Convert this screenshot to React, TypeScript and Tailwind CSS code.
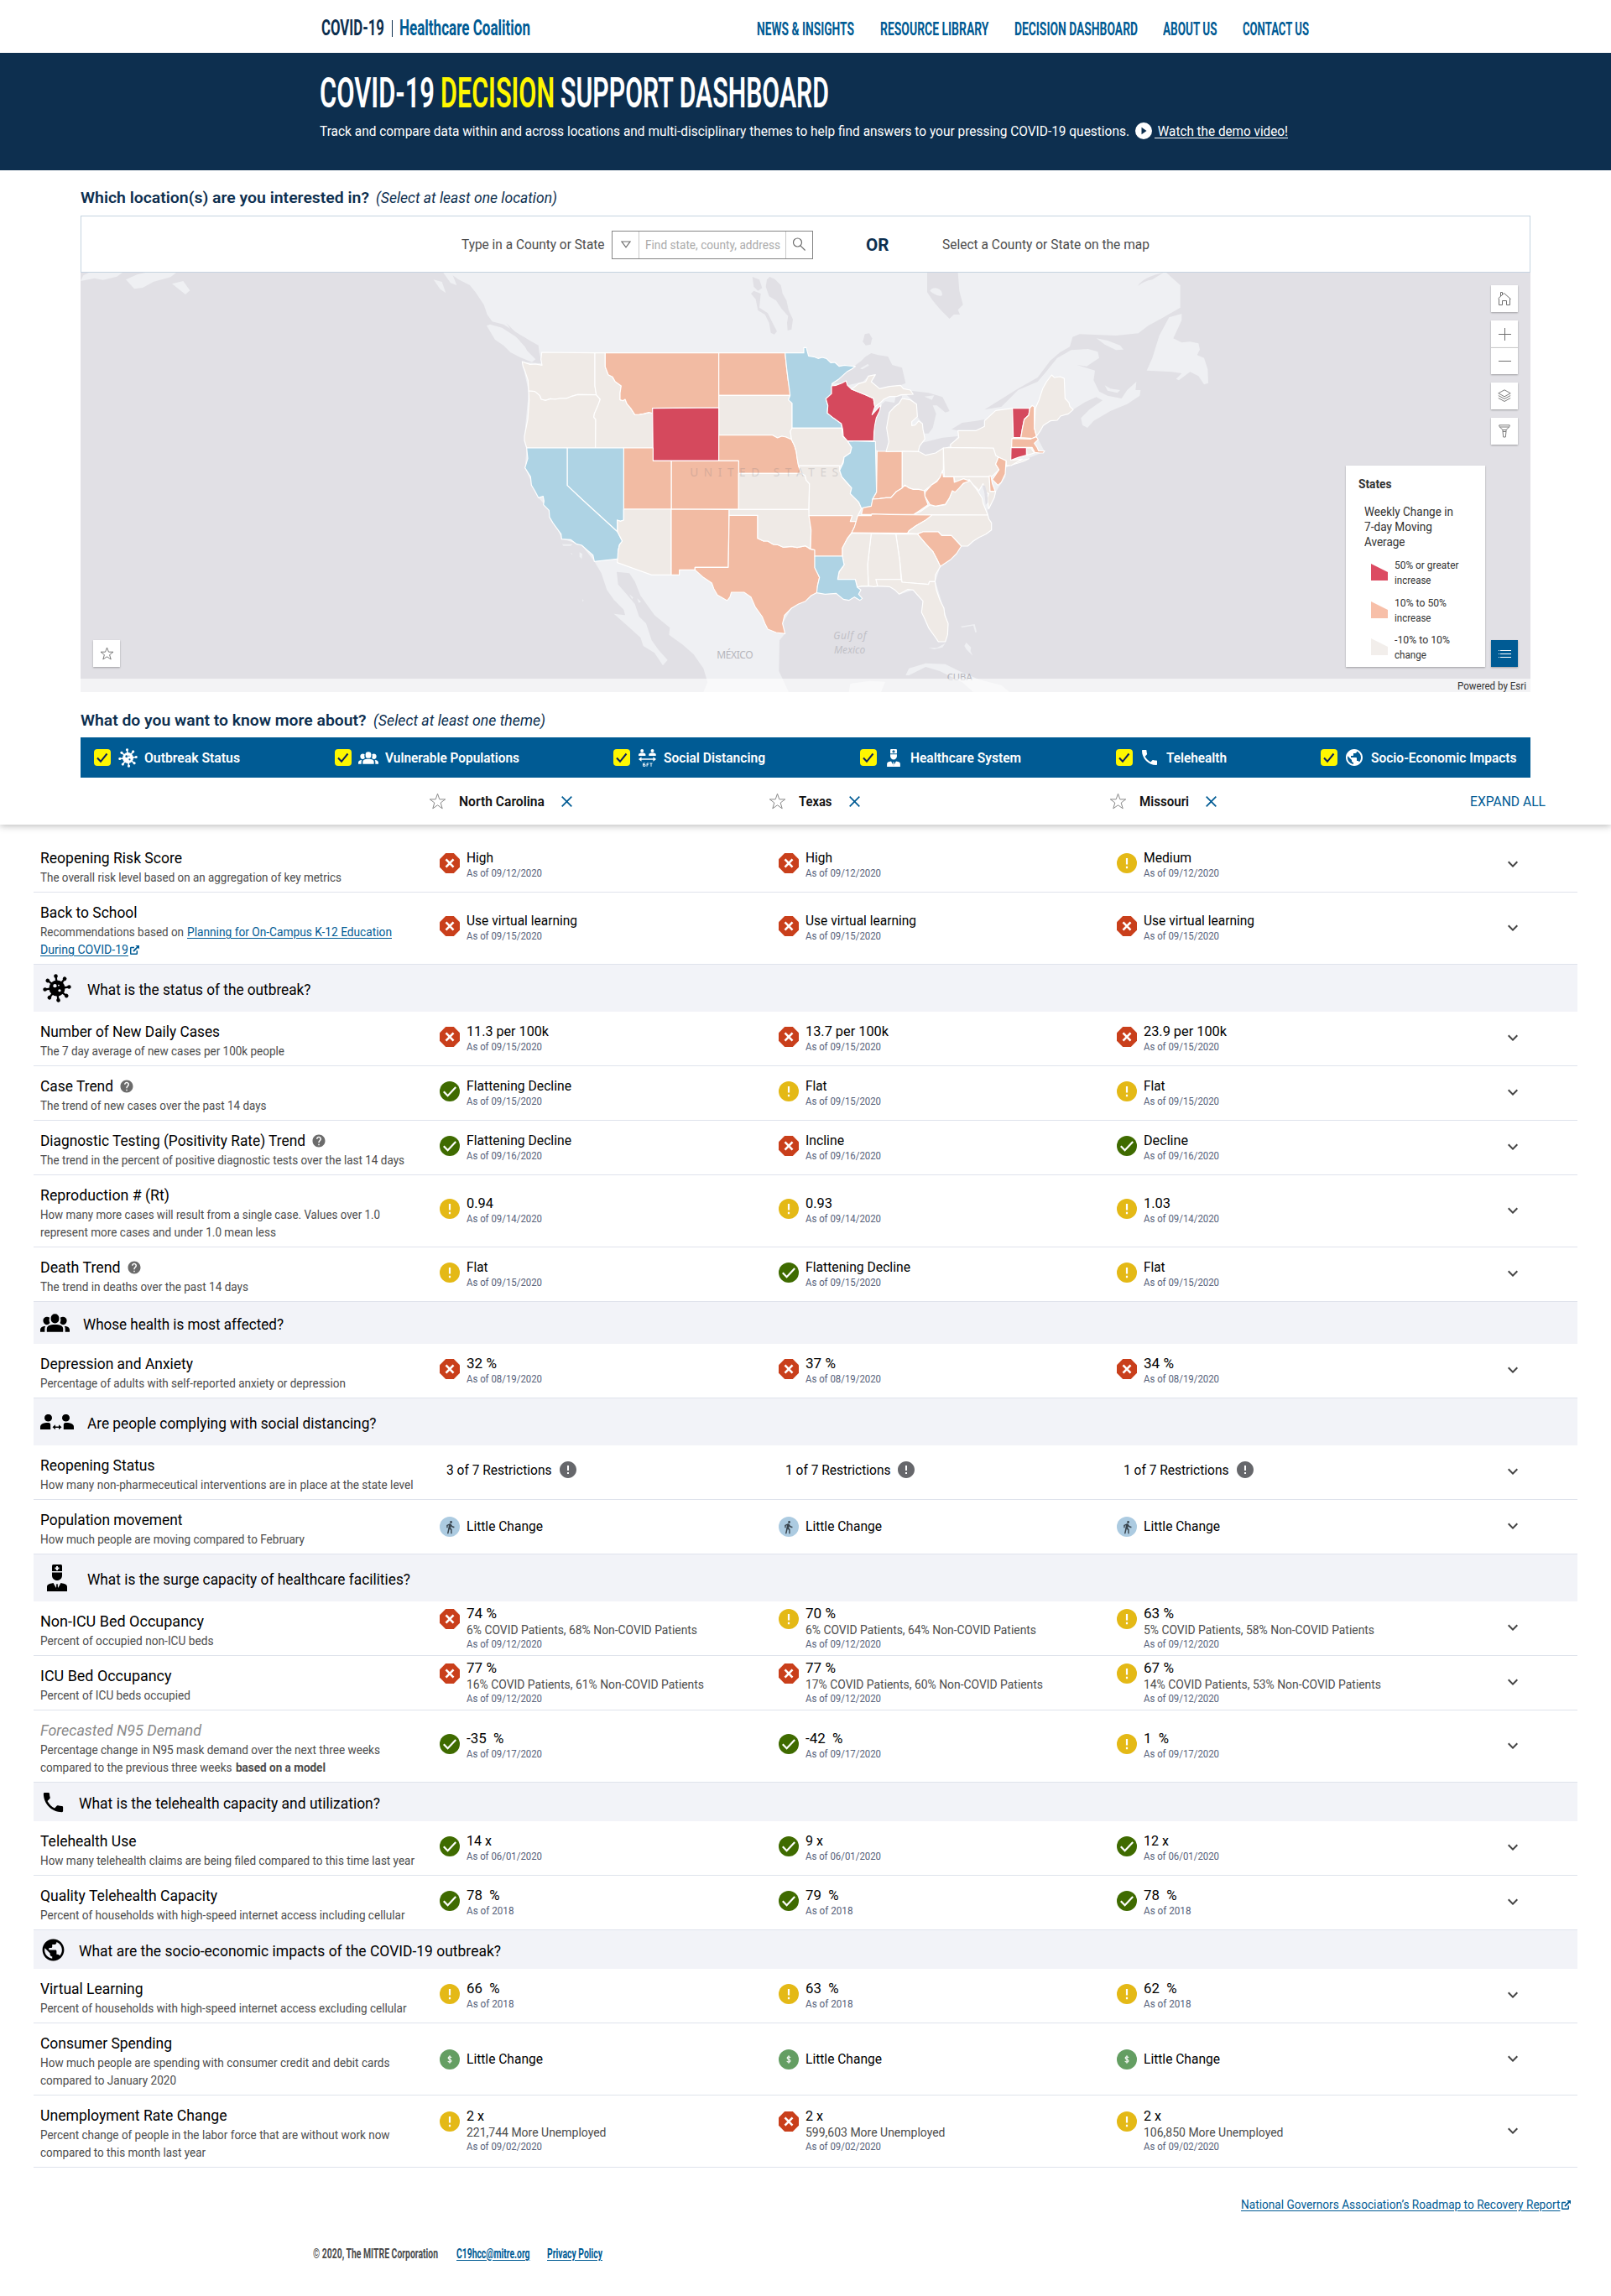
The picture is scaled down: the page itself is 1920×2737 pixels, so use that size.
import { useLayoutEffect, useRef, useState, type ReactNode } from 'react';
import { MdExpandMore, MdHelp, MdError, MdPhone, MdPublic, MdDirectionsWalk } from 'react-icons/md';

/* Narrow text set to a fixed measure: the glyphs are condensed to fill `w` pixels. */
function Fit({ w, children, className = '' }: { w: number; children: ReactNode; className?: string }) {
  const ref = useRef<HTMLSpanElement>(null);
  const [scale, setScale] = useState(1);
  useLayoutEffect(() => {
    const el = ref.current;
    if (el && el.offsetWidth > 0) {
      const natural = el.getBoundingClientRect().width / scale;
      setScale(w / natural);
    }
  }, [w]);
  return (
    <span className="inline-block whitespace-pre" style={{ width: w }}>
      <span ref={ref} className={`inline-block origin-left ${className}`} style={{ transform: `scaleX(${scale})` }}>
        {children}
      </span>
    </span>
  );
}

/* ---------- icons ---------- */

function Virus({ size, spot }: { size: number; spot: string }) {
  const arms = [0, 45, 90, 135, 180, 225, 270, 315];
  return (
    <svg width={size} height={size} viewBox="0 0 32 32" fill="currentColor">
      <g transform="rotate(-6 16 16)">
        {arms.map((a) => (
          <g key={a} transform={`rotate(${a} 16 16)`}>
            <rect x="15" y="2.4" width="2.2" height="8" />
            <circle cx="16" cy="2.4" r="2.2" />
          </g>
        ))}
      </g>
      <circle cx="16" cy="16" r="9" />
      <circle cx="13.6" cy="13.4" r="2" className={spot} />
      <circle cx="18.8" cy="18.6" r="1.5" className={spot} />
      <circle cx="17.8" cy="12.8" r="0.9" className={spot} />
    </svg>
  );
}

function People({ w, h }: { w: number; h: number }) {
  return (
    <svg width={w} height={h} viewBox="0 0 36 22" fill="currentColor">
      <rect x="13" y="0" width="10" height="11.5" rx="4.8" />
      <path d="M8 22v-3.5c0-3.6 3-5.5 10-5.5s10 1.900 10 5.500V22z" />
      <path d="M11.500 4.500C8 2.200 3.500 4 3.500 8c0 3 1.800 5.200 4.300 5.200 2 0 3.200-1 4-2.200-1-2-1.200-4.500-.3-6.500z" />
      <path d="M24.500 4.500C28 2.200 32.500 4 32.500 8c0 3-1.800 5.200-4.300 5.200-2 0-3.200-1-4-2.200 1-2 1.200-4.500.3-6.500z" />
      <path d="M0 22v-2.500c0-2.500 1.800-4.300 6.500-4.700C5.800 16 5.500 17 5.500 18.500V22z" />
      <path d="M36 22v-2.500c0-2.500-1.800-4.300-6.500-4.700.7 1.200 1 2.200 1 3.700V22z" />
    </svg>
  );
}

function DistancingWide() {
  return (
    <svg width="40" height="18" viewBox="0 0 40 18" fill="currentColor">
      <ellipse cx="9.500" cy="4.200" rx="4.500" ry="4.400" />
      <path d="M0 18v-2.800C0 12 3 10.200 7 10l3 .1c1.300.3 2.200 1 2.200 2.300V18z" />
      <ellipse cx="30.500" cy="4.200" rx="4.500" ry="4.400" />
      <path d="M40 18v-2.800c0-3.200-3-5-7-5.200l-3 .1c-1.300.3-2.200 1-2.200 2.300V18z" />
      <path d="M14.500 15.200l3.500-3v2.200h4v-2.200l3.500 3-3.500 3V16h-4v2.200z" />
    </svg>
  );
}

function DistancingSmall() {
  return (
    <svg width="21" height="21" viewBox="0 0 21 21" fill="currentColor">
      <circle cx="4.200" cy="2" r="2" />
      <path d="M0 8V6.500C0 5.200 1.500 4.600 4.200 4.600s4.200.6 4.200 1.900V8z" />
      <circle cx="16.500" cy="2" r="2" />
      <path d="M12.300 8V6.500c0-1.300 1.500-1.900 4.200-1.900s4.200.6 4.200 1.900V8z" />
      <path d="M0 12l3.500-2.800v2h14v-2L21 12l-3.500 2.800v-2h-14v2z" />
      <path d="M5.500 17h2.500M5.500 17v3.300H8v-1.700H5.500M10 20.800V17h2.200M10 18.700h1.800M13.500 17h3M15 17v3.800" fill="none" stroke="currentColor" strokeWidth="0.9" />
    </svg>
  );
}

function Doctor({ w, h, cross }: { w: number; h: number; cross: string }) {
  return (
    <svg width={w} height={h} viewBox="0 0 24 32" fill="currentColor">
      <path d="M6 1.500Q6 0 7.500 0h9Q18 0 18 1.500V8H6z" />
      <path d="M11 2h2v1.500h1.500v2H13V7h-2V5.500H9.500v-2H11z" className={cross} />
      <path d="M6 9.500h12V13c0 3.500-2.700 6-6 6s-6-2.500-6-6z" />
      <path d="M0 32v-5.500C0 24 2 23 7.500 22L12 30l4.500-8c5.500 1 7.500 2 7.500 4.500V32z" />
      <path d="M10.700 23.500h2.600l-.6 2 .8 3L12 30.500 10.500 28.500l.8-3z" />
    </svg>
  );
}

type Status = 'bad' | 'warn' | 'good' | 'walk' | 'money';

function StatusIcon({ kind }: { kind: Status }) {
  if (kind === 'bad')
    return (
      <svg width="24" height="24" viewBox="0 0 24 24" className="shrink-0">
        <path d="M7.200 0h9.600L24 7.200v9.600L16.800 24H7.200L0 16.800V7.200z" className="fill-[#c93f1b]" />
        <path d="M7.500 7.300l9 9.400M16.500 7.300l-9 9.400" className="stroke-white" strokeWidth="2.600" />
      </svg>
    );
  if (kind === 'warn')
    return (
      <svg width="24" height="24" viewBox="0 0 24 24" className="shrink-0">
        <circle cx="12" cy="12" r="12" className="fill-[#e4b916]" />
        <path d="M12 6v7.600M12 15.800v2.400" className="stroke-white" strokeWidth="2.200" />
      </svg>
    );
  if (kind === 'good')
    return (
      <svg width="24" height="24" viewBox="0 0 24 24" className="shrink-0">
        <circle cx="12" cy="12" r="12" className="fill-[#3f6b00]" />
        <path d="M4.800 12.200l4.800 5L19.200 7" fill="none" className="stroke-white" strokeWidth="2.200" />
      </svg>
    );
  if (kind === 'walk')
    return (
      <span className="flex h-6 w-6 shrink-0 items-center justify-center rounded-full bg-[#accbe1] text-[#38444d]">
        <MdDirectionsWalk size={17} />
      </span>
    );
  return (
    <svg width="24" height="24" viewBox="0 0 24 24" className="shrink-0">
      <circle cx="12" cy="12" r="12" className="fill-[#649e62]" />
      <path d="M14 10c-.3-.9-1-1.200-2-1.200-1.200 0-1.900.6-1.900 1.500 0 2.200 3.900 1.100 3.900 3.400 0 1-.8 1.500-2 1.500s-1.900-.4-2.200-1.300M12 7.300v9.400" fill="none" className="stroke-white" strokeWidth="1.100" />
    </svg>
  );
}

function ExternalLink() {
  return (
    <svg width="11" height="11" viewBox="0 0 11 11" className="inline-block" fill="none" stroke="currentColor" strokeWidth="1.500">
      <path d="M8.300 6.200v3.300a.8.800 0 0 1-.8.800H1.500a.8.800 0 0 1-.8-.8V3.300c0-.4.300-.8.800-.8H5" />
      <path d="M4 7L9.600 1.400" strokeWidth="1.800" />
      <path d="M6.400 0H11v4.600z" fill="currentColor" stroke="none" />
    </svg>
  );
}

/* ---------- top of the page ---------- */

function NavBar() {
  const links: [string, number][] = [
    ['NEWS & INSIGHTS', 116],
    ['RESOURCE LIBRARY', 129.5],
    ['DECISION DASHBOARD', 147],
    ['ABOUT US', 64.5],
    ['CONTACT US', 79],
  ];
  return (
    <header className="flex h-[63px] items-center bg-white pt-[5px] pl-[382.500px] font-bold text-[#005b94]">
      <div className="flex h-8 w-[519.500px] items-center text-[25px] leading-8">
        <Fit w={75} className="text-[#0d2f4f]">COVID-19</Fit>
        <span className="mr-[8px] ml-[9px] h-5 w-px bg-[#0d2f4f]" />
        <Fit w={156}>Healthcare Coalition</Fit>
      </div>
      <nav className="flex gap-[30.500px] pt-px text-[22px] leading-8">
        {links.map(([t, w]) => (
          <a key={t}><Fit w={w}>{t}</Fit></a>
        ))}
      </nav>
    </header>
  );
}

function Hero() {
  return (
    <section className="h-[140px] bg-[#0d2f4f] pt-[19px] pl-[381px] text-white">
      <h1 className="flex h-[58px] items-center gap-[7px] text-[49.500px] leading-[58px] font-semibold">
        <Fit w={137}>COVID-19</Fit>
        <Fit w={136} className="text-[#fff700]">DECISION</Fit>
        <Fit w={320}>SUPPORT DASHBOARD</Fit>
      </h1>
      <p className="mt-[5px] flex h-[22px] items-center text-[17px] leading-[22px]">
        <Fit w={965}>
          Track and compare data within and across locations and multi-disciplinary themes to help find answers to your pressing COVID-19 questions.
        </Fit>
        <svg width="20" height="20" viewBox="0 0 20 20" className="ml-[7px]">
          <circle cx="10" cy="10" r="10" fill="white" />
          <path d="M7.500 5.800v8.400l6-4.200z" className="fill-[#0d2f4f]" />
        </svg>
        <a className="ml-[3px]"><Fit w={159} className="underline underline-offset-2"> Watch the demo video!</Fit></a>
      </p>
    </section>
  );
}

function SectionTitle({ text, w, hint, hw }: { text: string; w: number; hint: string; hw: number }) {
  return (
    <h2 className="flex items-center gap-[8px] text-[19px] leading-6 text-[#0d2f4f]">
      <Fit w={w} className="font-semibold">{text}</Fit>
      <Fit w={hw} className="italic">{hint}</Fit>
    </h2>
  );
}

function SearchBar() {
  return (
    <div className="flex h-[68px] items-center border border-[#c5d3e0] pt-px pl-[453px] text-[16.500px] leading-6 text-[#4c4c4c]">
      <Fit w={170.5}>Type in a County or State</Fit>
      <div className="ml-[8.500px] flex h-[34px] w-[240px] items-stretch border border-[#858585] bg-white text-[#6e6e6e]">
        <div className="flex w-[32px] items-center justify-center border-r border-[#cacaca]">
          <svg width="12" height="9" viewBox="0 0 12 9" fill="none" stroke="currentColor" strokeWidth="1.200"><path d="M1 1h10L6 7.800z" /></svg>
        </div>
        <div className="w-[174px] pl-[7px] text-[15px] leading-[33px] text-[#ababab]">
          <Fit w={161}>Find state, county, address</Fit>
        </div>
        <div className="flex flex-1 items-center justify-center border-l border-[#cacaca]">
          <svg width="17" height="17" viewBox="0 0 17 17" fill="none" stroke="currentColor" strokeWidth="1.200">
            <circle cx="6.500" cy="6" r="5" />
            <path d="M10 9.800l5.600 5.700" />
          </svg>
        </div>
      </div>
      <span className="ml-[63px] text-[20px] font-bold text-[#0d2f4f]"><Fit w={27.5}>OR</Fit></span>
      <span className="ml-[63px]"><Fit w={247}>Select a County or State on the map</Fit></span>
    </div>
  );
}

/* ---------- map ---------- */

type Fill = 'r' | 'o' | 'n' | 'b';
const fills: Record<Fill, string> = { r: 'fill-[#d5495d]', o: 'fill-[#f2bba3]', n: 'fill-[#efeae6]', b: 'fill-[#aed3e4]' };

const westStates: [Fill, string][] = [
  ['n', '257,300 447,302 447,420 452,452 385,451 365,457 345,465 320,465 305,468 288,466 270,472 255,468 250,455 232,440 210,438 208,400 198,370 190,350 187,333 200,338 215,343 235,342 258,346 254,325'],
  ['n', '210,438 232,440 250,455 255,468 270,472 288,466 305,468 320,465 345,465 365,457 385,451 452,452 466,468 458,490 445,520 443,532 450,540 449,642 203,642 195,615 195,600 203,560 207,540 212,470'],
  ['n', '447,302 484,302 484,352 495,380 510,388 520,405 541,420 537,445 537,470 547,473 555,468 562,485 575,500 590,523 605,522 620,520 640,515 653,505 655,642 449,642 450,540 443,532 445,520 458,490 466,468 452,452 447,420'],
  ['o', '484,302 890,302 890,498 653,500 653,518 640,515 620,520 605,522 590,523 575,500 562,485 555,468 547,473 537,470 537,445 541,420 520,405 510,388 495,380 484,352'],
  ['o', '890,302 1127,302 1133,360 1138,400 1145,440 1145,454 890,454'],
  ['n', '890,454 1145,454 1139,470 1152,482 1152,572 1146,582 1150,612 1130,603 1115,600 1100,606 1082,596 890,596'],
  ['b', '1127,302 1194,302 1194,283 1203,283 1206,295 1211,313 1230,316 1245,322 1260,318 1275,322 1290,337 1305,336 1320,350 1340,346 1352,348 1378,350 1365,360 1350,368 1320,395 1295,412 1293,448 1273,466 1280,490 1278,517 1300,535 1315,545 1328,555 1330,571 1152,571 1152,482 1139,470 1145,454 1138,400 1133,360'],
  ['r', '653,500 890,498 890,688 655,688'],
  ['o', '890,596 1082,596 1100,606 1115,600 1130,603 1150,612 1160,632 1167,655 1171,680 1175,706 1185,733 961,733 961,688 890,688'],
  ['o', '720,688 961,688 961,861 720,861'],
  ['n', '961,733 1185,733 1198,740 1203,758 1214,770 1212,862 961,861'],
  ['o', '550,642 655,642 655,688 720,688 720,861 550,861'],
  ['b', '348,642 550,642 550,900 538,904 527,900 528,942 400,825 348,776'],
  ['b', '203,642 348,642 348,776 400,825 528,942 545,975 535,988 530,1010 535,1038 445,1048 440,1025 420,1008 400,990 380,985 360,970 328,968 326,950 310,928 297,910 285,890 283,865 263,845 265,832 262,815 245,820 232,795 220,775 217,745 197,713 207,680'],
  ['n', '550,861 720,861 720,1096 650,1096 527,1052 530,1010 535,988 545,975 528,942 527,900 538,904 550,900'],
  ['o', '720,861 927,862 924,1069 805,1069 805,1078 749,1078 749,1096 720,1096'],
  ['o', '927,883 1029,883 1029,965 1050,975 1065,975 1085,987 1100,988 1120,997 1150,994 1170,998 1200,992 1215,1003 1234,1007 1234,1070 1242,1085 1250,1105 1243,1135 1243,1158 1220,1170 1200,1190 1175,1200 1150,1215 1125,1240 1118,1270 1127,1306 1095,1302 1065,1290 1055,1270 1045,1245 1020,1210 1005,1175 980,1158 935,1158 930,1175 920,1188 885,1168 872,1145 865,1125 835,1105 805,1078 805,1069 924,1069'],
  ['n', '927,862 1212,862 1216,900 1220,935 1218,1003 1200,992 1170,998 1150,994 1120,997 1100,988 1085,987 1065,975 1050,975 1029,965 1029,883 927,883'],
];

const eastStates: [Fill, string][] = [
  ['n', '-48,571 130,571 133,600 150,615 165,640 160,660 138,675 135,690 128,706 -25,706 -30,680 -33,655 -40,632 -50,612 -54,582'],
  ['n', '-25,706 122,706 122,722 130,745 150,768 165,785 160,805 190,835 200,858 187,884 182,905 160,905 167,884 12,884 14,770 3,758 -2,740 -15,733'],
  ['o', '12,884 167,884 160,905 182,905 175,925 165,945 150,965 132,1000 132,1029 33,1029 33,1007 18,1003 20,935'],
  ['r', '93,420 110,418 130,410 145,402 150,418 165,432 215,452 243,465 248,495 238,523 270,488 265,510 253,535 248,560 245,585 244,617 150,617 135,600 133,575 128,555 100,535 78,517 80,490 73,466 93,448'],
  ['b', '150,617 250,619 254,800 240,825 237,850 220,855 200,858 190,835 160,805 165,785 150,768 130,745 122,722 135,695 138,675 160,660 165,640'],
  ['o', '256,654 346,654 346,785 325,798 305,820 288,820 265,823 240,825 254,800'],
  ['n', '288,655 298,620 290,570 295,540 300,515 318,495 335,482 345,465 375,470 397,485 400,530 380,548 380,562 392,560 405,545 418,555 420,575 427,610 408,635 403,655 346,654'],
  ['n', '165,432 190,412 215,405 225,385 250,380 235,405 265,430 300,422 340,418 350,430 375,435 385,450 340,452 325,458 300,458 280,468 268,480 248,495 243,465 215,452'],
  ['n', '346,654 405,655 430,668 465,660 493,642 493,720 482,745 470,760 450,775 425,795 405,790 385,790 370,785 355,775 346,785'],
  ['n', '493,642 520,640 670,642 680,655 680,668 690,675 680,700 692,720 665,745 496,745'],
  ['n', '520,640 518,630 548,605 545,580 610,580 640,565 640,545 680,508 740,500 743,605 735,685 775,682 735,705 718,705 718,688 690,675 680,668 672,642'],
  ['r', '740,500 802,500 798,525 782,540 775,575 770,605 743,605'],
  ['o', '802,500 810,490 818,495 818,570 826,600 810,608 770,605 775,575 782,540 798,525'],
  ['n', '822,500 835,470 848,430 862,405 880,381 890,390 910,387 925,393 928,465 942,480 945,493 957,505 940,520 912,528 900,543 875,545 850,562 840,580 826,600 818,570'],
  ['o', '738,608 805,610 825,602 832,612 818,625 828,640 833,652 855,653 850,660 838,660 820,658 810,640 737,640'],
  ['n', '790,642 806,642 818,660 792,668'],
  ['o', '690,675 717,688 714,735 700,765 688,775 668,755 692,720 680,700'],
  ['n', '530,745 657,745 660,797 680,797 675,820 655,860 650,820 655,805 640,800 635,770 620,795 612,785 590,765 565,752 535,765'],
  ['o', '657,742 663,742 668,770 678,797 660,797'],
  ['n', '387,880 410,870 445,845 465,850 500,845 515,820 525,795 550,780 585,755 600,775 612,790 632,822 635,840 645,865 652,882'],
  ['o', '490,722 493,745 530,745 532,765 565,752 588,760 565,768 550,785 535,800 525,795 515,820 500,843 465,850 445,845 427,815 428,800 450,775 470,762 482,745'],
  ['o', '200,880 205,856 235,850 240,825 265,823 288,820 305,820 325,798 346,785 355,775 370,785 385,790 405,790 425,795 427,815 438,845 410,865 387,880'],
  ['o', '187,884 235,884 237,878 300,880 452,882 445,895 430,900 395,920 370,938 365,947 165,945 175,925'],
  ['n', '452,882 652,882 655,895 665,910 665,935 645,950 620,962 600,975 580,993 557,993 522,955 487,955 475,942 420,942 400,949 365,947 370,938 395,920 430,900'],
  ['o', '400,950 420,942 475,942 487,955 522,955 557,993 540,1020 520,1040 482,1066 470,1040 455,1012 430,985'],
  ['n', '323,950 400,950 430,985 455,1012 470,1040 482,1066 465,1095 463,1120 443,1120 440,1130 345,1122 337,1045'],
  ['n', '235,948 323,950 337,1045 342,1112 252,1112 258,1136 245,1138 225,1135 222,1060'],
  ['n', '165,947 235,948 222,1060 225,1136 200,1136 185,1140 178,1112 115,1112 120,1085 138,1060 132,1029 132,1000 150,965'],
  ['b', '33,1029 132,1029 138,1060 120,1085 115,1112 178,1112 185,1140 198,1150 190,1165 203,1180 195,1187 175,1175 155,1187 135,1183 110,1162 70,1165 40,1160 43,1135 50,1105 33,1070'],
  ['n', '252,1112 342,1112 345,1122 440,1130 443,1120 463,1120 468,1150 480,1185 495,1215 498,1240 510,1270 508,1310 500,1335 475,1335 465,1320 440,1285 425,1250 415,1230 420,1190 385,1150 365,1148 335,1165 320,1150 300,1138 258,1136'],
  ['r', '735,641 790,641 790,668 760,676 734,686'],
];

const landW =
  'M-75,15 L-40,40 0,60 20,85 50,130 62,165 80,190 120,200 160,225 200,250 245,275 248,300 258,340 187,335 210,440 195,600 203,642 197,713 245,820 283,862 328,966 400,990 445,1048 470,1090 490,1150 515,1185 550,1220 555,1240 515,1235 560,1275 610,1320 620,1350 660,1375 690,1420 707,1400 675,1365 650,1330 630,1270 605,1245 590,1200 560,1165 530,1130 525,1085 570,1090 590,1120 610,1170 660,1240 715,1285 712,1310 760,1345 800,1380 835,1430 850,1480 835,1515 1140,1515 1105,1440 1107,1330 1127,1306 1118,1270 1150,1215 1243,1158 1310,1160 1385,1140 1500,1138 1540,1165 1585,1150 1620,1190 1620,1235 1675,1335 1700,1335 1710,1270 1665,1120 1682,1066 1757,993 1865,935 1850,865 1880,800 1915,745 1918,710 2055,655 2026,600 2050,560 2157,505 2200,478 2240,460 2262,472 2215,505 2185,535 2190,560 2208,570 2230,545 2290,510 2350,485 2395,455 2398,435 2380,435 2383,405 2350,435 2330,465 2280,455 2250,440 2230,400 2235,365 2170,345 2205,350 2250,320 2245,298 2210,288 2150,292 2100,320 2060,370 2030,405 1960,435 1900,495 1840,505 1960,430 2030,390 2075,330 2110,300 2145,280 2155,245 2180,235 2310,240 2390,232 2425,205 2480,175 2540,140 2540,60 2490,15 Z';

const eastLand = [
  '1300,175 1345,162 1345,185 1315,250 1345,265 1375,262 1405,268 1410,290 1400,310 1425,320 1438,360 1440,410 1425,415 1405,385 1375,370 1335,400 1325,395 1345,375 1310,370 1220,365 1240,320 1265,240',
  '1040,250 1080,258 1125,275 1137,290 1110,292 1070,272',
  '1070,418 1090,430 1125,435 1115,445 1080,437',
  '358,1455 370,1430 430,1412 500,1415 550,1440 620,1470 700,1490 730,1515 600,1515 560,1480 480,1440 430,1425 400,1440 370,1455',
  '155,1515 160,1485 230,1475 285,1478 270,1515',
  '568,1350 575,1338 592,1355 590,1368 598,1385 575,1362',
  '555,1280 605,1272 612,1300 607,1302 600,1277 560,1284',
  '440,1357 470,1357 500,1340 490,1355 460,1362',
];

const eastLakes = [
  '435,15 545,15 550,80 563,130 545,148 552,165 530,165 515,180 500,165 480,145 455,115 435,85',
  '95,412 125,380 160,360 200,330 215,315 235,303 260,310 295,315 310,345 345,355 358,410 340,418 300,422 265,430 235,405 250,380 225,385 205,405 150,418 145,402 130,410',
  '270,488 285,475 318,480 322,460 345,455 345,465 335,482 318,495 300,515 290,570 298,620 288,655 260,655 245,640 248,560 253,535',
  '350,440 375,437 440,445 490,460 515,510 500,515 470,490 455,490 467,520 455,570 440,590 425,590 420,575 418,555 400,530 397,485 375,465',
  '400,655 412,625 430,620 490,605 545,600 520,632 465,660 430,668',
  '522,575 560,552 610,545 640,540 640,565 610,580 545,580',
  '205,262 212,235 228,232 238,250 233,272 215,275',
];

const westLakes = [
  '1062,40 1072,30 1090,38 1112,60 1118,90 1132,115 1140,150 1155,182 1150,218 1136,222 1134,195 1138,170 1115,145 1095,115 1070,100 1058,65',
  '1015,80 1040,90 1035,140 1065,160 1085,200 1098,225 1088,236 1076,230 1070,195 1055,165 1030,150 1022,110 1005,90',
  '1010,30 1035,40 1045,70 1030,80 1015,65',
];

function UsMap() {
  return (
    <svg width="1728" height="500" viewBox="0 0 5184 1500" className="block bg-[#e1e0e5]">
      <g transform="translate(1392 -15)">
        <path d={landW} className="fill-[#eff0f3]" />
        <polygon points="60,205 72,200 115,212 150,235 185,258 205,295 235,325 222,335 180,318 145,300 120,275 90,255" className="fill-[#eff0f3]" />
        <path d="M-1392,45 l10,-20 20,-10 h120 l-20,14 -50,12 -30,-6 z M-1230,40 l40,-18 30,-7 h110 l-20,16 l-60,16 l-40,22 l-30,4 z M-1065,55 l40,-10 l24,34 l-16,14 z" className="fill-[#eff0f3]" />
        <path d="M-130,40 l30,8 l14,40 l-20,-14 z M-95,15 h30 l18,45 l-22,-8 z" className="fill-[#eff0f3]" />
        <path d="M330,986 h38 l-8,6 h-26 z M392,1015 l10,6 l-2,18 l-8,-8 z M360,1018 l7,2 l-2,4 z M402,1182 l5,6 l-4,4 z" className="fill-[#eff0f3]" />
        {westLakes.map((p, i) => <polygon key={i} points={p} className="fill-[#e1e0e5]" />)}
        <path d="M570,1165 l14,12 l-4,6 z M598,1180 l14,12 l-8,4 z" className="fill-[#eff0f3]" />
        <path d="M130,195 l40,40 l30,14 l44,40 l-4,12 l-46,-24 l-30,-34 z" className="fill-[#e1e0e5]" />
      </g>
      <g transform="translate(2592 -15)">
        {eastLand.map((p, i) => <polygon key={i} points={p} className="fill-[#eff0f3]" />)}
        {eastLakes.map((p, i) => <polygon key={i} points={p} className="fill-[#e1e0e5]" />)}
        <path d="M445,80 q15,-20 40,0 q10,20 -5,18 q-20,-4 -35,-18z" className="fill-[#eff0f3]" />
        <path d="M195,358 l28,-17 l4,6 l-24,14 z M425,458 l35,-4 l-8,16 z" className="fill-[#eff0f3]" />
        <path d="M1190,60 q20,-30 90,-45 l-40,25 q-30,5 -50,22z" className="fill-[#e1e0e5]" />
      </g>
      <g transform="translate(1392 -15)" className="stroke-white" strokeWidth="3.500" strokeLinejoin="round">
        {westStates.map(([f, p], i) => <polygon key={i} points={p} className={fills[f]} />)}
      </g>
      <g transform="translate(2592 -15)" className="stroke-white" strokeWidth="3.500" strokeLinejoin="round">
        <polygon points="718,708 745,695 775,686 800,680 780,690 740,702" strokeWidth="3" className="fill-[#efeae6]" />
        {eastStates.map(([f, p], i) => <polygon key={i} points={p} className={fills[f]} />)}
        <path d="M632,775 l8,30 l4,40 l8,-8 l-2,-30 l-8,-30z" stroke="none" className="fill-[#e1e0e5]" />
      </g>
      <g className="fill-[#6f6f78] font-['Noto_Sans']">
        <text x="2179" y="730" fontSize="41" textLength="530" opacity="0.2">UNITED STATES</text>
        <text x="2275" y="1380" fontSize="36" textLength="130" opacity="0.45">MÉXICO</text>
        <text x="3098" y="1458" fontSize="34" textLength="90" opacity="0.45">CUBA</text>
        <g fontStyle="italic" opacity="0.28">
          <text x="2692" y="1311" fontSize="36" textLength="118">Gulf of</text>
          <text x="2694" y="1362" fontSize="36" textLength="112">Mexico</text>
        </g>
      </g>
      <rect x="0" y="1452" width="5184" height="48" fill="white" opacity="0.6" />
    </svg>
  );
}

function MapButton({ children, className = '' }: { children: ReactNode; className?: string }) {
  return (
    <button className={`flex h-8 w-8 items-center justify-center bg-white text-[#6e6e6e] shadow-[0_1px_2px_rgba(0,0,0,0.3)] ${className}`}>
      {children}
    </button>
  );
}

function LegendItem({ color, lines }: { color: string; lines: [string, number][] }) {
  return (
    <div className="flex h-[44.500px]">
      <svg width="20" height="20" viewBox="0 0 20 20" className={`mt-[7px] mr-2 ${color}`}><path d="M0 0L20 10V20H0z" /></svg>
      <div className="flex flex-col text-[12.500px] leading-[18px]">
        {lines.map(([t, w]) => <Fit key={t} w={w}>{t}</Fit>)}
      </div>
    </div>
  );
}

function Legend() {
  return (
    <div className="absolute top-[230px] left-[1508px] h-[240px] w-[166px] bg-white pt-[13px] pl-[15px] text-[#323232] shadow-[0_1px_2px_rgba(0,0,0,0.3)]">
      <div className="text-[14px] leading-[18px] font-bold"><Fit w={39.5}>States</Fit></div>
      <div className="mt-[15px] ml-[7px] flex flex-col text-[14px] leading-[18px]">
        <Fit w={106}>Weekly Change in</Fit>
        <Fit w={81}>7-day Moving</Fit>
        <Fit w={48.5}>Average</Fit>
      </div>
      <div className="mt-[10px] ml-[15px]">
        <LegendItem color="fill-[#dc4b62]" lines={[['50% or greater', 76.5], ['increase', 43.5]]} />
        <LegendItem color="fill-[#f7bfa8]" lines={[['10% to 50%', 62], ['increase', 43.5]]} />
        <LegendItem color="fill-[#f2eeeb]" lines={[['-10% to 10%', 66], ['change', 38]]} />
      </div>
    </div>
  );
}

function MapPanel() {
  return (
    <div className="relative h-[500px]">
      <UsMap />
      <div className="absolute top-[15px] right-[15px] flex flex-col gap-[10px]">
        <MapButton>
          <svg width="16" height="17" viewBox="0 0 16 17" fill="none" stroke="currentColor"><path d="M1.500 8.200V15.500H5.500V10.500H10.500V15.500H14.500V8.200M.5 8L7.500 1.500 15.500 8.500M3.500 5V.5H5.500V3" /></svg>
        </MapButton>
        <div>
          <MapButton>
            <svg width="15" height="15" viewBox="0 0 15 15" stroke="currentColor"><path d="M0 7.500h15M7.500 0v15" /></svg>
          </MapButton>
          <MapButton className="border-t border-[#cacaca]">
            <svg width="15" height="15" viewBox="0 0 15 15" stroke="currentColor"><path d="M0 7.500h15" /></svg>
          </MapButton>
        </div>
        <MapButton>
          <svg width="16" height="16" viewBox="0 0 16 16" fill="none" stroke="currentColor" strokeWidth="0.900"><path d="M8 .8l7.200 4L8 8.800.800 4.800zM.8 7.500L8 11.500l7.200-4M.8 10.500l7.200 4 7.200-4" /></svg>
        </MapButton>
        <MapButton>
          <svg width="14" height="16" viewBox="0 0 14 16" fill="none" stroke="currentColor" strokeWidth="0.900"><path d="M.8.800h12.400v1.600L9 6.500v1.700L8.300 15H5.700L5 8.200V6.500L.8 2.400zM1.500 3h11M4.800 6.500h4.400M5 8.500h4" /></svg>
        </MapButton>
      </div>
      <div className="absolute top-[438px] left-[15px]">
        <MapButton>
          <svg width="17" height="16" viewBox="0 0 17 16" fill="none" stroke="currentColor" strokeWidth="0.900"><path d="M8.500 1l2 5.200h5.500l-4.400 3.400 1.600 5.400-4.700-3.200L3.800 15l1.600-5.400L1 6.200h5.500z" /></svg>
        </MapButton>
      </div>
      <Legend />
      <div className="absolute top-[438px] right-[15px]">
        <button className="flex h-8 w-8 items-center justify-center bg-[#005b94] shadow-[0_1px_2px_rgba(0,0,0,0.3)]">
          <svg width="15" height="11" viewBox="0 0 15 11" stroke="white"><path d="M2 1.500h13M2 5.500h13M2 9.500h13M0 1.500h1M0 5.500h1M0 9.500h1" /></svg>
        </button>
      </div>
      <div className="absolute right-[5px] bottom-0 h-4 text-[13px] leading-[17px] text-[#323232]"><Fit w={82}>Powered by Esri</Fit></div>
    </div>
  );
}

/* ---------- themes and selected places ---------- */

function ThemeItem({ icon, label, w }: { icon: ReactNode; label: string; w: number }) {
  return (
    <label className="flex items-center">
      <svg width="20" height="20" viewBox="0 0 20 20"><rect width="20" height="20" rx="4" className="fill-[#fff700]" /><path d="M4 10.500l4 4.300L15.500 5.500" fill="none" className="stroke-[#0d1f5c]" strokeWidth="2" /></svg>
      <span className="flex w-10 items-center justify-center">{icon}</span>
      <span className="pt-[2px]"><Fit w={w}>{label}</Fit></span>
    </label>
  );
}

function ThemeBar() {
  return (
    <div className="flex h-12 items-center justify-between bg-[#005b94] px-4 text-[16px] leading-6 font-semibold text-white">
      <ThemeItem label="Outbreak Status" w={114} icon={<Virus size={23} spot="fill-[#005b94]" />} />
      <ThemeItem label="Vulnerable Populations" w={160} icon={<People w={24} h={15} />} />
      <ThemeItem label="Social Distancing" w={121} icon={<DistancingSmall />} />
      <ThemeItem label="Healthcare System" w={132} icon={<Doctor w={16} h={21} cross="fill-[#005b94]" />} />
      <ThemeItem label="Telehealth" w={72} icon={<MdPhone size={24} />} />
      <ThemeItem label="Socio-Economic Impacts" w={173.5} icon={<MdPublic size={24} />} />
    </div>
  );
}

function Place({ name, w }: { name: string; w: number }) {
  return (
    <div className="flex h-[56px] items-center">
      <svg width="21" height="20" viewBox="0 0 21 20" fill="none" className="stroke-[#8a8a8a]"><path d="M10.500 1.200l2.300 6.600h6.900l-5.500 4.200 2 6.800-5.700-4-5.700 4 2-6.800L1.300 7.800h6.900z" /></svg>
      <span className="mt-[2px] ml-[15px] text-[16px] leading-6 font-semibold text-[#111]"><Fit w={w}>{name}</Fit></span>
      <svg width="13" height="13" viewBox="0 0 13 13" className="ml-5 stroke-[#005b94]" strokeWidth="1.700"><path d="M.7.700l11.600 11.600M12.300.700L.7 12.300" /></svg>
    </div>
  );
}

/* ---------- metrics table ---------- */

type Val = { s: Status; t: string; w: number; sub?: string; subW?: number; d?: string };
type Line = [string, number];

const asOf = (d: string) => (d.length === 4 ? 56.5 : 90);

function Cell({ v }: { v: Val }) {
  return (
    <div className={`flex gap-2 ${v.d ? 'items-start' : 'items-center'}`}>
      <span className={v.d ? 'mt-[4px]' : ''}><StatusIcon kind={v.s} /></span>
      <div className={`flex flex-col ${v.d ? 'pb-[2px]' : ''}`}>
        <span className="h-5 text-[16px] leading-5 text-black"><Fit w={v.w}>{v.t}</Fit></span>
        {v.sub && <span className="h-[18px] text-[14px] leading-[18px] text-[#4c4c4c]"><Fit w={v.subW ?? 0}>{v.sub}</Fit></span>}
        {v.d && <span className="h-[15px] text-[13px] leading-[15px] text-[#56617a]"><Fit w={asOf(v.d)}>{`As of ${v.d}`}</Fit></span>}
      </div>
    </div>
  );
}

function Row({ title, desc, cells, help, tall, italic }: { title: Line; desc: ReactNode; cells: ReactNode[]; help?: boolean; tall?: boolean; italic?: boolean }) {
  return (
    <div className={`grid grid-cols-[484px_403.700px_403.700px_403.700px_1fr] border-b border-[#dfe3ec] bg-white ${tall ? 'h-[86px]' : 'h-[65px]'}`}>
      <div className="pt-[12px] pl-2">
        <div className={`flex h-6 items-center text-[17.500px] leading-6 ${italic ? 'text-[#8a8a8a] italic' : 'text-black'}`}>
          <Fit w={title[1]}>{title[0]}</Fit>
          {help && <MdHelp size={18} className="ml-[7px] text-[#6b6b6b]" />}
        </div>
        <div className="pt-px text-[14.500px] leading-[21px] text-[#4c4c4c]">{desc}</div>
      </div>
      {cells.map((c, i) => <div key={i} className="flex items-center">{c}</div>)}
      <div className="flex items-center pb-[2px] pl-[56px] text-[#444]"><MdExpandMore size={24} /></div>
    </div>
  );
}

const D = ({ lines }: { lines: Line[] }) => (
  <>{lines.map(([t, w]) => <div key={t} className="h-[21px]"><Fit w={w}>{t}</Fit></div>)}</>
);

function Group({ icon, iconBox, text, w, h }: { icon: ReactNode; iconBox: string; text: string; w: number; h: string }) {
  return (
    <div className={`flex items-center bg-[#f2f3f8] pl-2 text-black ${h}`}>
      <span className={`flex items-center ${iconBox}`}>{icon}</span>
      <span className="mt-[3px] text-[17.500px] leading-6"><Fit w={w}>{text}</Fit></span>
    </div>
  );
}

const v = (s: Status, t: string, w: number, d?: string, sub?: string, subW?: number): Val => ({ s, t, w, d, sub, subW });
const cellsOf = (vals: Val[]) => vals.map((x, i) => <Cell key={i} v={x} />);

function Restrictions({ n }: { n: number }) {
  return (
    <div className="flex items-center pb-[7px] pl-2 text-[16px] leading-5 text-black">
      <span className="mt-[2px]"><Fit w={125.5}>{`${n} of 7 Restrictions`}</Fit></span>
      <MdError size={24} className="ml-[7px] text-[#66676b]" />
    </div>
  );
}

function Metrics() {
  return (
    <main className="mx-10 pt-[16px]">
      <Row title={['Reopening Risk Score', 169]} desc={<D lines={[['The overall risk level based on an aggregation of key metrics', 359]]} />}
        cells={cellsOf([v('bad', 'High', 32, '09/12/2020'), v('bad', 'High', 32, '09/12/2020'), v('warn', 'Medium', 57, '09/12/2020')])} />
      <Row tall title={['Back to School', 115.5]}
        desc={
          <>
            <div className="flex h-[21px] gap-1">
              <Fit w={171}>Recommendations based on</Fit>
              <a className="text-[#005b94]"><Fit w={244} className="underline underline-offset-2">Planning for On-Campus K-12 Education</Fit></a>
            </div>
            <a className="flex h-[21px] items-center gap-[2px] text-[#005b94]"><Fit w={105} className="underline underline-offset-2">During COVID-19</Fit><ExternalLink /></a>
          </>
        }
        cells={cellsOf([v('bad', 'Use virtual learning', 132, '09/15/2020'), v('bad', 'Use virtual learning', 132, '09/15/2020'), v('bad', 'Use virtual learning', 132, '09/15/2020')])} />

      <Group h="h-[56px]" icon={<Virus size={34} spot="fill-[#f2f3f8]" />} iconBox="w-[56px] pl-[3px]" text="What is the status of the outbreak?" w={266.5} />
      <Row title={['Number of New Daily Cases', 214]} desc={<D lines={[['The 7 day average of new cases per 100k people', 291]]} />}
        cells={cellsOf([v('bad', '11.3 per 100k', 98, '09/15/2020'), v('bad', '13.7 per 100k', 99, '09/15/2020'), v('bad', '23.9 per 100k', 99, '09/15/2020')])} />
      <Row help title={['Case Trend', 87]} desc={<D lines={[['The trend of new cases over the past 14 days', 269.5]]} />}
        cells={cellsOf([v('good', 'Flattening Decline', 125, '09/15/2020'), v('warn', 'Flat', 25.5, '09/15/2020'), v('warn', 'Flat', 25.5, '09/15/2020')])} />
      <Row help title={['Diagnostic Testing (Positivity Rate) Trend', 316]} desc={<D lines={[['The trend in the percent of positive diagnostic tests over the last 14 days', 434]]} />}
        cells={cellsOf([v('good', 'Flattening Decline', 125, '09/16/2020'), v('bad', 'Incline', 46, '09/16/2020'), v('good', 'Decline', 53, '09/16/2020')])} />
      <Row tall title={['Reproduction # (Rt)', 154]} desc={<D lines={[['How many more cases will result from a single case. Values over 1.0', 405], ['represent more cases and under 1.0 mean less', 281]]} />}
        cells={cellsOf([v('warn', '0.94', 32, '09/14/2020'), v('warn', '0.93', 32, '09/14/2020'), v('warn', '1.03', 32, '09/14/2020')])} />
      <Row help title={['Death Trend', 95.5]} desc={<D lines={[['The trend in deaths over the past 14 days', 248]]} />}
        cells={cellsOf([v('warn', 'Flat', 25.5, '09/15/2020'), v('good', 'Flattening Decline', 125, '09/15/2020'), v('warn', 'Flat', 25.5, '09/15/2020')])} />

      <Group h="h-[50px]" icon={<People w={35} h={22} />} iconBox="w-[51px]" text="Whose health is most affected?" w={239} />
      <Row title={['Depression and Anxiety', 182]} desc={<D lines={[['Percentage of adults with self-reported anxiety or depression', 364]]} />}
        cells={cellsOf([v('bad', '32 %', 36, '08/19/2020'), v('bad', '37 %', 36, '08/19/2020'), v('bad', '34 %', 36, '08/19/2020')])} />

      <Group h="h-[56px]" icon={<DistancingWide />} iconBox="w-[56px]" text="Are people complying with social distancing?" w={344.5} />
      <Row title={['Reopening Status', 136.5]} desc={<D lines={[['How many non-pharmeceutical interventions are in place at the state level', 444.5]]} />}
        cells={[<Restrictions key="a" n={3} />, <Restrictions key="b" n={1} />, <Restrictions key="c" n={1} />]} />
      <Row title={['Population movement', 169.5]} desc={<D lines={[['How much people are moving compared to February', 315]]} />}
        cells={cellsOf([v('walk', 'Little Change', 91), v('walk', 'Little Change', 91), v('walk', 'Little Change', 91)])} />

      <Group h="h-[56px]" icon={<Doctor w={24} h={32} cross="fill-[#f2f3f8]" />} iconBox="w-[56px] pl-2" text="What is the surge capacity of healthcare facilities?" w={385} />
      <Row title={['Non-ICU Bed Occupancy', 195]} desc={<D lines={[['Percent of occupied non-ICU beds', 206.5]]} />}
        cells={cellsOf([v('bad', '74 %', 36, '09/12/2020', '6% COVID Patients, 68% Non-COVID Patients', 275), v('warn', '70 %', 36, '09/12/2020', '6% COVID Patients, 64% Non-COVID Patients', 275), v('warn', '63 %', 36, '09/12/2020', '5% COVID Patients, 58% Non-COVID Patients', 275)])} />
      <Row title={['ICU Bed Occupancy', 156.5]} desc={<D lines={[['Percent of ICU beds occupied', 179]]} />}
        cells={cellsOf([v('bad', '77 %', 36, '09/12/2020', '16% COVID Patients, 61% Non-COVID Patients', 283), v('bad', '77 %', 36, '09/12/2020', '17% COVID Patients, 60% Non-COVID Patients', 283), v('warn', '67 %', 36, '09/12/2020', '14% COVID Patients, 53% Non-COVID Patients', 283)])} />
      <Row tall italic title={['Forecasted N95 Demand', 192]}
        desc={
          <>
            <D lines={[['Percentage change in N95 mask demand over the next three weeks', 405]]} />
            <div className="flex h-[21px] gap-1"><Fit w={228.5}>compared to the previous three weeks</Fit><Fit w={107} className="font-bold">based on a model</Fit></div>
          </>
        }
        cells={cellsOf([v('good', '-35  %', 44.5, '09/17/2020'), v('good', '-42  %', 44.5, '09/17/2020'), v('warn', '1  %', 30, '09/17/2020')])} />

      <Group h="h-[46px]" icon={<MdPhone size={31} />} iconBox="w-[46px]" text="What is the telehealth capacity and utilization?" w={359} />
      <Row title={['Telehealth Use', 114.5]} desc={<D lines={[['How many telehealth claims are being filed compared to this time last year', 446]]} />}
        cells={cellsOf([v('good', '14 x', 30, '06/01/2020'), v('good', '9 x', 21, '06/01/2020'), v('good', '12 x', 30, '06/01/2020')])} />
      <Row title={['Quality Telehealth Capacity', 211]} desc={<D lines={[['Percent of households with high-speed internet access including cellular', 434.5]]} />}
        cells={cellsOf([v('good', '78  %', 39.5, '2018'), v('good', '79  %', 39.5, '2018'), v('good', '78  %', 39.5, '2018')])} />

      <Group h="h-[46px]" icon={<MdPublic size={31} />} iconBox="w-[46px]" text="What are the socio-economic impacts of the COVID-19 outbreak?" w={503} />
      <Row title={['Virtual Learning', 122.5]} desc={<D lines={[['Percent of households with high-speed internet access excluding cellular', 436.5]]} />}
        cells={cellsOf([v('warn', '66  %', 39.5, '2018'), v('warn', '63  %', 39.5, '2018'), v('warn', '62  %', 39.5, '2018')])} />
      <Row tall title={['Consumer Spending', 157]} desc={<D lines={[['How much people are spending with consumer credit and debit cards', 416.5], ['compared to January 2020', 162]]} />}
        cells={cellsOf([v('money', 'Little Change', 91), v('money', 'Little Change', 91), v('money', 'Little Change', 91)])} />
      <Row tall title={['Unemployment Rate Change', 222.5]} desc={<D lines={[['Percent change of people in the labor force that are without work now', 416.5], ['compared to this month last year', 197]]} />}
        cells={cellsOf([v('warn', '2 x', 21, '09/02/2020', '221,744 More Unemployed', 166.5), v('bad', '2 x', 21, '09/02/2020', '599,603 More Unemployed', 166.5), v('warn', '2 x', 21, '09/02/2020', '106,850 More Unemployed', 166.5)])} />
    </main>
  );
}

export default function App() {
  return (
    <div className="h-[2737px] w-[1920px] bg-white font-['Roboto',sans-serif]">
      <NavBar />
      <Hero />
      <section className="mx-24 pt-[21px]">
        <SectionTitle text="Which location(s) are you interested in?" w={344} hint="(Select at least one location)" hw={216} />
        <div className="mt-[9px]">
          <SearchBar />
          <MapPanel />
        </div>
      </section>
      <section className="h-[158px] bg-white px-24 pt-[22px] shadow-[0_2px_8px_rgba(0,0,0,0.25)] [clip-path:inset(0_0_-20px_0)]">
        <SectionTitle text="What do you want to know more about?" w={340.5} hint="(Select at least one theme)" hw={205} />
        <div className="mt-2"><ThemeBar /></div>
        <div className="ml-[415px] grid grid-cols-[405px_406px_430px_1fr]">
          <Place name="North Carolina" w={102} />
          <Place name="Texas" w={39.5} />
          <Place name="Missouri" w={59} />
          <span className="flex h-[56px] items-center pt-[2px] text-[16.500px] text-[#005b94]"><Fit w={90}>EXPAND ALL</Fit></span>
        </div>
      </section>
      <Metrics />
      <footer className="text-[14.500px]">
        <a className="mt-[34px] ml-[1478.500px] flex h-[21px] items-center gap-[2px] leading-[21px] text-[#005b94]">
          <Fit w={380.5} className="underline underline-offset-2">National Governors Association’s Roadmap to Recovery Report</Fit>
          <ExternalLink />
        </a>
        <div className="mt-[36px] ml-[373px] flex text-[16px] leading-6 font-bold text-[#4c4c4c]">
          <Fit w={149}>© 2020, The MITRE Corporation</Fit>
          <a className="ml-[22px] text-[#005b94]"><Fit w={87.5} className="underline underline-offset-2">C19hcc@mitre.org</Fit></a>
          <a className="ml-[20px] text-[#005b94]"><Fit w={66} className="underline underline-offset-2">Privacy Policy</Fit></a>
        </div>
      </footer>
    </div>
  );
}
